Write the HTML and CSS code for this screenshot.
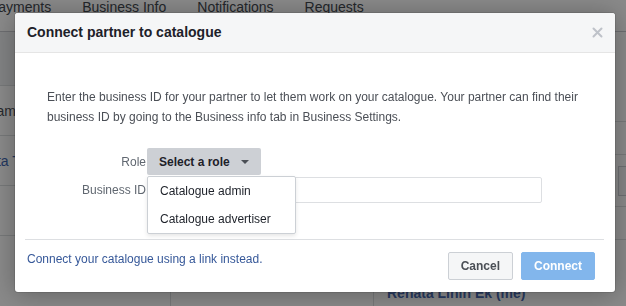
FILE: index.html
```html
<!DOCTYPE html>
<html lang="en">
<head>
  <meta charset="UTF-8" />
  <title>Connect partner to catalogue</title>
  <link rel="stylesheet" href="styles.css">
</head>
<body>

  <div class="page">
    <div class="tabs">
      <span class="tab">Payments</span>
      <span class="tab">Business Info</span>
      <span class="tab">Notifications</span>
      <span class="tab">Requests</span>
    </div>

    <div class="main">
      <div class="side">
        <div class="side-row top"></div>
        <div class="side-row"><span class="cut">Catalogue name</span></div>
        <div class="side-row"><span class="cut link">Data Test</span></div>
        <div class="side-row"></div>
      </div>
      <div class="panel">
        <div class="panel-row tall"></div>
        <div class="panel-row"></div>
        <div class="panel-row mid"><span class="box"></span></div>
        <div class="panel-row"></div>
      </div>
    </div>

    <div class="table-row">
      <div class="cell first"></div>
      <div class="cell second"></div>
      <div class="cell"><span class="owner">Renata Linin Ek (me)</span></div>
    </div>
  </div>

  <div class="overlay"></div>

  <div class="dialog">
    <div class="dialog-header">
      <h2>Connect partner to catalogue</h2>
      <span class="close">
        <svg width="11" height="11" viewBox="0 0 11 11">
          <path d="M1.5 1.5 L9.5 9.5 M9.5 1.5 L1.5 9.5" stroke="#bec2c9" stroke-width="2" stroke-linecap="round" />
        </svg>
      </span>
    </div>

    <div class="dialog-body">
      <p>Enter the business ID for your partner to let them work on your catalogue. Your partner can find their business ID by going to the Business info tab in Business Settings.</p>

      <div class="form">
        <label>Role</label>
        <div class="role-select">
          <button class="select-btn">Select a role <span class="caret"></span></button>
          <ul class="menu">
            <li>Catalogue admin</li>
            <li>Catalogue advertiser</li>
          </ul>
        </div>

        <label for="businessId">Business ID</label>
        <input type="text" id="businessId" />
      </div>
    </div>

    <div class="dialog-footer">
      <a href="#" class="link-alt">Connect your catalogue using a link instead.</a>
      <div class="actions">
        <button class="btn cancel">Cancel</button>
        <button class="btn connect">Connect</button>
      </div>
    </div>
  </div>

</body>
</html>
```

FILE: styles.css
```css
* {
  box-sizing: border-box;
}

body {
  margin: 0;
  width: 626px;
  height: 306px;
  overflow: hidden;
  font-family: 'Liberation Sans', Arial, Helvetica, sans-serif;
  background: #fff;
}

/* page behind the dialog */
.page {
  display: flex;
  flex-direction: column;
}

.tabs {
  display: flex;
  gap: 31px;
  height: 32px;
  margin-left: -11px;
  border-bottom: 1px solid #c9ccd1;
}

.tab {
  font-size: 14px;
  line-height: 16px;
  margin-top: -1px;
  color: #444950;
}

.main {
  display: grid;
  grid-template-columns: 170px 1fr;
  height: 253px;
}

.side-row {
  height: 50px;
  border-bottom: 1px solid #dddfe2;
  display: flex;
  align-items: center;
  font-size: 14px;
  color: #4b4f56;
}

.side-row.top {
  height: 54px;
  background: #f1f2f4;
}

.cut {
  margin-left: -79px;
}

.cut.link {
  margin-left: -21px;
  color: #4267b2;
}

.panel-row {
  height: 33px;
  border-bottom: 1px solid #dddfe2;
  display: flex;
  justify-content: flex-end;
  align-items: center;
}

.panel-row.tall {
  height: 90px;
}

.panel-row.mid {
  height: 52px;
}

.box {
  width: 8px;
  height: 30px;
  border: 1px solid #ccd0d5;
  border-right: none;
  background: #f5f6f7;
}

.table-row {
  display: grid;
  grid-template-columns: 170px 203px 1fr;
  height: 30px;
}

.cell {
  border-left: 1px solid #dddfe2;
}

.cell.first {
  border-left: none;
}

.owner {
  display: block;
  padding-left: 13px;
  font-size: 14px;
  font-weight: bold;
  line-height: 16px;
  color: #4a6cb3;
}

.overlay {
  position: fixed;
  inset: 0;
  background: rgba(0, 0, 0, 0.46);
}

/* dialog */
.dialog {
  position: absolute;
  left: 15px;
  top: 13px;
  width: 600px;
  background: #fff;
  border-radius: 3px;
  box-shadow: 0 2px 26px rgba(0, 0, 0, 0.3), 0 0 0 1px rgba(0, 0, 0, 0.1);
}

.dialog-header {
  display: flex;
  align-items: center;
  justify-content: space-between;
  height: 40px;
  padding: 0 12px;
  background: #f5f6f7;
  border-bottom: 1px solid #e5e5e5;
  border-radius: 3px 3px 0 0;
}

h2 {
  margin: 0;
  font-size: 14px;
  line-height: 19px;
  color: #1d2129;
}

.close {
  display: flex;
}

.dialog-body {
  padding: 34px 32px 36px;
}

p {
  margin: 0;
  font-size: 12px;
  line-height: 20px;
  color: #4b4f56;
}

.form {
  display: grid;
  grid-template-columns: 99px 396px;
  column-gap: 1px;
  row-gap: 2px;
  margin-top: 21px;
}

label {
  align-self: center;
  text-align: right;
  font-size: 12px;
  color: #606770;
}

.role-select {
  position: relative;
}

.select-btn {
  display: inline-flex;
  align-items: center;
  height: 27px;
  padding: 0 12px;
  border: none;
  border-radius: 2px;
  background: #cdd0d5;
  font-family: inherit;
  font-size: 12px;
  font-weight: bold;
  color: #1d2129;
}

.caret {
  width: 0;
  height: 0;
  margin-left: 11px;
  border-left: 4px solid transparent;
  border-right: 4px solid transparent;
  border-top: 4px solid #4b4f56;
}

.menu {
  position: absolute;
  top: 28px;
  left: 0;
  z-index: 2;
  width: 149px;
  margin: 0;
  padding: 0;
  list-style: none;
  background: #fff;
  border: 1px solid #ccd0d5;
  border-radius: 2px;
  box-shadow: 0 2px 4px rgba(0, 0, 0, 0.1);
}

.menu li {
  height: 28px;
  line-height: 28px;
  padding: 0 12px;
  font-size: 12px;
  color: #1d2129;
}

input {
  width: 395px;
  height: 26px;
  border: 1px solid #dddfe2;
  border-radius: 2px;
}

.dialog-footer {
  display: flex;
  justify-content: space-between;
  align-items: flex-start;
  margin: 0 11px 0 10px;
  padding: 12px 9px 12px 2px;
  border-top: 1px solid #dddfe2;
}

.link-alt {
  font-size: 12px;
  line-height: 14px;
  color: #365899;
  text-decoration: none;
}

.actions {
  display: flex;
  gap: 8px;
}

.btn {
  height: 28px;
  padding: 0 12px;
  border-radius: 2px;
  font-family: inherit;
  font-size: 12px;
  font-weight: bold;
}

.cancel {
  background: #f5f6f7;
  border: 1px solid #ccd0d5;
  color: #4b4f56;
}

.connect {
  background: #82b6ec;
  border: 1px solid #82b6ec;
  color: #fff;
}
```
